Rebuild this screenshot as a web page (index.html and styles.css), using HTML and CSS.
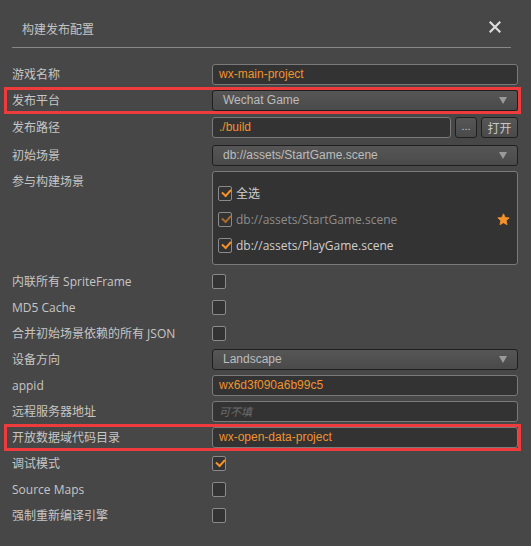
FILE: index.html
```html
<!DOCTYPE html>
<html>
<head>
<meta charset="utf-8">
<link rel="stylesheet" href="styles.css">
</head>
<body>
<div class="dialog">
  <div class="header">
    <span class="title">构建发布配置</span>
    <span class="close">
      <svg width="12" height="12" viewBox="0 0 12 12"><path d="M1.5 1.5 L10.5 10.5 M10.5 1.5 L1.5 10.5" stroke="#dcdcdc" stroke-width="2.2" stroke-linecap="square"/></svg>
    </span>
  </div>
  <div class="form">
    <div class="row r1">
      <div class="label">游戏名称</div>
      <div class="field"><div class="input val">wx-main-project</div></div>
    </div>
    <div class="row r2 hl">
      <div class="label">发布平台</div>
      <div class="field"><div class="select"><span>Wechat Game</span><span class="arrow"></span></div></div>
    </div>
    <div class="row r3">
      <div class="label">发布路径</div>
      <div class="field path">
        <div class="input val grow">./build</div>
        <div class="btn dots">...</div>
        <div class="btn open">打开</div>
      </div>
    </div>
    <div class="row r4">
      <div class="label">初始场景</div>
      <div class="field"><div class="select"><span>db://assets/StartGame.scene</span><span class="arrow"></span></div></div>
    </div>
    <div class="row scenes">
      <div class="label top">参与构建场景</div>
      <div class="field">
        <div class="list">
          <div class="item"><span class="cb on"></span><span class="itext">全选</span></div>
          <div class="item dis"><span class="cb on"></span><span class="itext">db://assets/StartGame.scene</span>
            <svg class="star" width="13" height="13" viewBox="0 0 24 24"><path d="M12 1.5 L15.1 8.2 L22.5 9 L17 14 L18.5 21.5 L12 17.8 L5.5 21.5 L7 14 L1.5 9 L8.9 8.2 Z" fill="#f5922a" stroke="#f5922a" stroke-width="1.5" stroke-linejoin="round"/></svg>
          </div>
          <div class="item"><span class="cb on"></span><span class="itext">db://assets/PlayGame.scene</span></div>
        </div>
      </div>
    </div>
    <div class="row">
      <div class="label">内联所有 SpriteFrame</div>
      <div class="field"><span class="cb"></span></div>
    </div>
    <div class="row">
      <div class="label">MD5 Cache</div>
      <div class="field"><span class="cb"></span></div>
    </div>
    <div class="row">
      <div class="label">合并初始场景依赖的所有 JSON</div>
      <div class="field"><span class="cb"></span></div>
    </div>
    <div class="row">
      <div class="label">设备方向</div>
      <div class="field"><div class="select"><span>Landscape</span><span class="arrow"></span></div></div>
    </div>
    <div class="row">
      <div class="label">appid</div>
      <div class="field"><div class="input val">wx6d3f090a6b99c5</div></div>
    </div>
    <div class="row">
      <div class="label">远程服务器地址</div>
      <div class="field"><div class="input ph">可不填</div></div>
    </div>
    <div class="row hl">
      <div class="label">开放数据域代码目录</div>
      <div class="field"><div class="input val">wx-open-data-project</div></div>
    </div>
    <div class="row">
      <div class="label">调试模式</div>
      <div class="field"><span class="cb on"></span></div>
    </div>
    <div class="row">
      <div class="label">Source Maps</div>
      <div class="field"><span class="cb"></span></div>
    </div>
    <div class="row">
      <div class="label">强制重新编译引擎</div>
      <div class="field"><span class="cb"></span></div>
    </div>
  </div>
</div>
</body>
</html>
```

FILE: styles.css
```css
html, body {
  margin: 0;
  padding: 0;
  background: #474747;
}
body {
  width: 531px;
  height: 546px;
  overflow: hidden;
  font-family: "Open Sans", "Noto Sans CJK SC", sans-serif;
  font-size: 12px;
  color: #c8c8c8;
}
.dialog {
  display: flex;
  flex-direction: column;
}
.header {
  margin: 0 20px 0 12px;
  height: 47px;
  border-bottom: 1px solid #888888;
  display: flex;
  align-items: center;
  justify-content: space-between;
  padding: 0 10px 0 10px;
}
.title {
  font-family: "Noto Sans CJK SC", sans-serif;
  font-size: 12px;
  color: #c4c4c4;
  padding-top: 9px;
}
.close {
  display: flex;
  padding-top: 6px;
  margin-right: 0;
}
.form {
  display: flex;
  flex-direction: column;
  padding: 13px 13px 0 12px;
}
.row {
  display: flex;
  align-items: center;
  height: 26px;
  position: relative;
}
.row.r3, .row.r4 {
  height: 28px;
}
.row.hl::after {
  content: "";
  position: absolute;
  left: -8px;
  right: -3px;
  top: 0;
  bottom: -1px;
  border: 3px solid #ee3b3b;
  pointer-events: none;
}
.label {
  width: 200px;
  flex: none;
  font-family: "Open Sans", "Noto Sans CJK SC", sans-serif;
  color: #c6c6c6;
  white-space: nowrap;
}
.label.top {
  align-self: flex-start;
  padding-top: 1px;
}
.field {
  flex: 1;
  display: flex;
  align-items: center;
  min-width: 0;
}
.input {
  flex: 1;
  height: 20px;
  box-sizing: border-box;
  height: 21px;
  border: 1px solid #7a7a7a;
  border-radius: 3px;
  background: #333333;
  font-family: "Liberation Sans", Arial, sans-serif;
  font-size: 12px;
  line-height: 19px;
  padding-left: 6px;
}
.val {
  color: #f0922e;
}
.ph {
  color: #6e6e6e;
  font-style: italic;
  font-family: "Noto Sans CJK SC", sans-serif;
  font-size: 11px;
}
.select {
  flex: 1;
  box-sizing: border-box;
  height: 21px;
  border: 1px solid #1f1f1f;
  border-radius: 3px;
  background: linear-gradient(#565656, #4a4a4a);
  font-family: "Liberation Sans", Arial, sans-serif;
  font-size: 12px;
  color: #bcbcbc;
  display: flex;
  align-items: center;
  justify-content: space-between;
  padding: 0 10px 0 10px;
}
.arrow {
  width: 0;
  height: 0;
  border-left: 4.5px solid transparent;
  border-right: 4.5px solid transparent;
  border-top: 7px solid #9a9a9a;
}
.path {
  gap: 4px;
}
.grow {
  flex: 1;
}
.btn {
  flex: none;
  box-sizing: border-box;
  height: 21px;
  border: 1px solid #1f1f1f;
  border-radius: 3px;
  background: linear-gradient(#565656, #4a4a4a);
  color: #c8c8c8;
  display: flex;
  align-items: center;
  justify-content: center;
  font-family: "Noto Sans CJK SC", sans-serif;
  font-size: 12px;
}
.btn.dots {
  width: 22px;
  font-family: "Liberation Sans", sans-serif;
  font-size: 11px;
  padding-bottom: 3px;
}
.btn.open {
  width: 37px;
}
.scenes {
  height: 94px;
  margin-top: 2px;
  margin-bottom: 3px;
  align-items: stretch;
}
.scenes .field {
  align-items: stretch;
}
.list {
  flex: 1;
  box-sizing: border-box;
  border: 1px solid #7a7a7a;
  border-radius: 3px;
  background: #333333;
  display: flex;
  flex-direction: column;
  padding: 8px 5px 0 5px;
}
.item {
  height: 26px;
  display: flex;
  align-items: center;
  gap: 4px;
  color: #cfcfcf;
}
.item.dis {
  color: #8d8d8d;
}
.item.dis .cb.on::after {
  border-color: #a86b30;
}
.star {
  margin-left: auto;
  margin-right: 2px;
}
.cb {
  display: inline-block;
  box-sizing: border-box;
  width: 14px;
  height: 15px;
  border: 1px solid #8a8a8a;
  border-radius: 2px;
  background: #333333;
  position: relative;
  flex: none;
}
.cb.on::after {
  content: "";
  position: absolute;
  left: 3px;
  top: 2px;
  width: 7px;
  height: 4px;
  border-left: 2px solid #f5922a;
  border-bottom: 2px solid #f5922a;
  transform: rotate(-48deg);
  transform-origin: center;
}
```
